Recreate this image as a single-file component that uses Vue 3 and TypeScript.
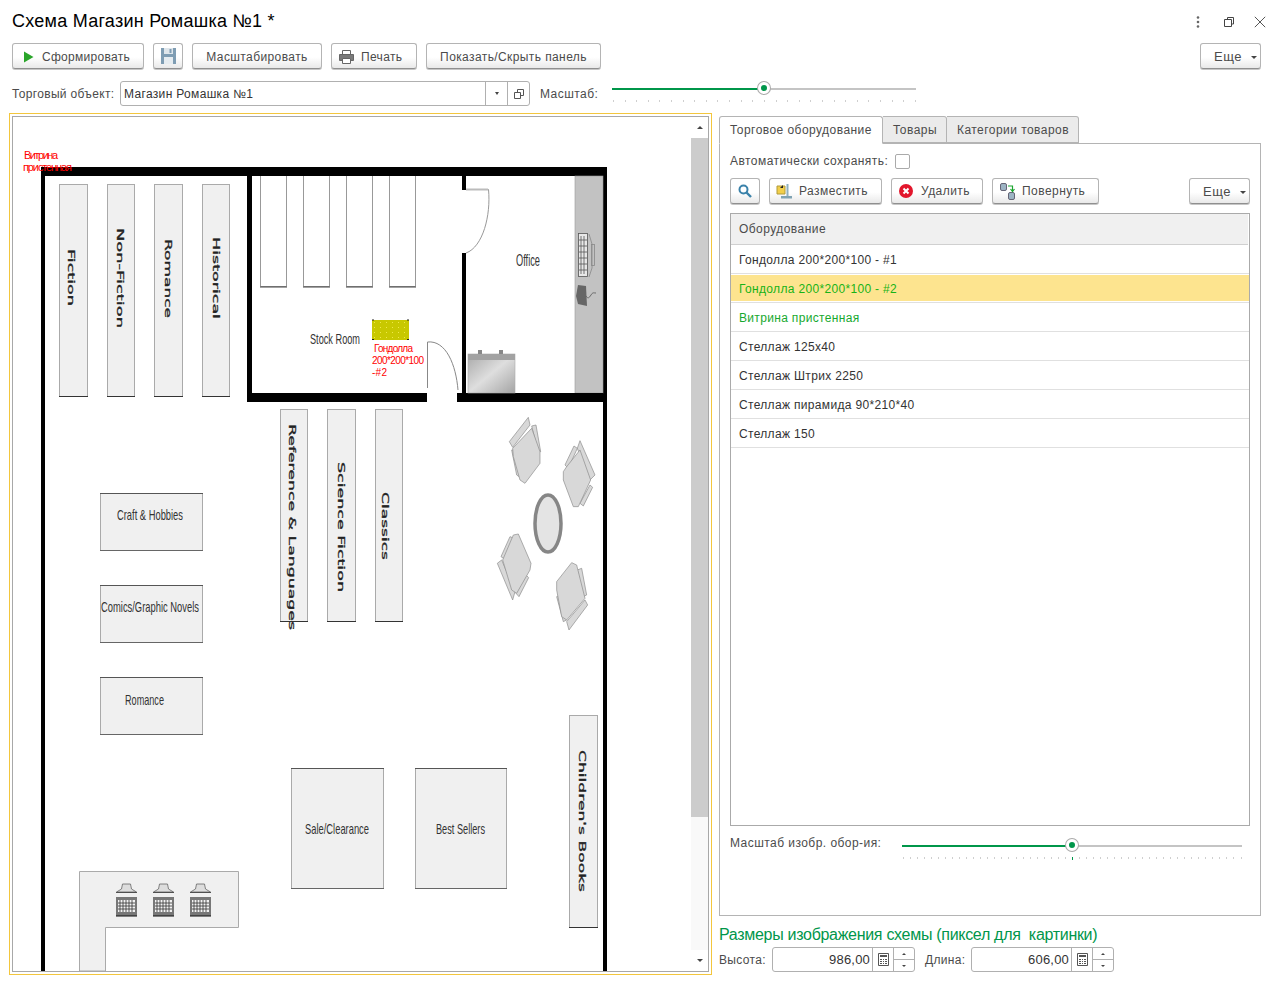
<script setup lang="ts">
const equipment = [
  { name: 'Гондолла 200*200*100 - #1', cls: '' },
  { name: 'Гондолла 200*200*100 - #2', cls: 'selected' },
  { name: 'Витрина пристенная', cls: 'green' },
  { name: 'Стеллаж 125х40', cls: '' },
  { name: 'Стеллаж Штрих 2250', cls: '' },
  { name: 'Стеллаж пирамида 90*210*40', cls: '' },
  { name: 'Стеллаж 150', cls: '' },
]
const ticksTop = Array.from({ length: 27 }, (_, i) => i)
const ticksBottom = Array.from({ length: 49 }, (_, i) => i)
const shelves = [
  { x: 59, y: 184, w: 29, h: 213, t: 'Fiction', tx: 68, ty: 249, len: 57 },
  { x: 107, y: 184, w: 28, h: 213, t: 'Non-Fiction', tx: 117, ty: 228, len: 100 },
  { x: 154, y: 184, w: 29, h: 213, t: 'Romance', tx: 165, ty: 239, len: 79 },
  { x: 202, y: 184, w: 28, h: 213, t: 'Historical', tx: 213, ty: 237, len: 82 },
  { x: 280, y: 409, w: 28, h: 213, t: 'Reference & Languages', tx: 289, ty: 424, len: 206 },
  { x: 327, y: 409, w: 29, h: 213, t: 'Science Fiction', tx: 338, ty: 462, len: 130 },
  { x: 375, y: 409, w: 28, h: 213, t: 'Classics', tx: 382, ty: 492, len: 68 },
  { x: 569, y: 715, w: 29, h: 213, t: "Children's Books", tx: 579, ty: 750, len: 142 },
]
const boxes = [
  { x: 100, y: 493, w: 103, h: 58, t: 'Craft & Hobbies', tx: 117, ty: 520, len: 66 },
  { x: 100, y: 585, w: 103, h: 58, t: 'Comics/Graphic Novels', tx: 101, ty: 612, len: 98 },
  { x: 100, y: 677, w: 103, h: 58, t: 'Romance', tx: 125, ty: 705, len: 39 },
  { x: 291, y: 768, w: 93, h: 121, t: 'Sale/Clearance', tx: 305, ty: 834, len: 64 },
  { x: 415, y: 768, w: 92, h: 121, t: 'Best Sellers', tx: 436, ty: 834, len: 49 },
]
const roomShelves = [260, 303, 346, 389]
const registers = [116, 153, 190]
const registerBars = [0, 1, 2, 3, 4]
const chairs = [
  {
    back: '118,125 175,52 180,75 128,142',
    arms: ['185,78 198,75 212,155 205,155', '125,150 135,150 150,232 140,225'],
    seat: '128,145 185,85 210,155 210,190 165,250 150,240 130,170',
  },
  {
    back: '330,122 375,225 360,240 322,145',
    arms: ['285,195 312,138 322,145 295,205', '330,310 360,255 368,262 340,318'],
    seat: '290,200 330,150 362,240 325,320 310,320 280,240 280,215',
  },
  {
    back: '82,490 95,480 135,575 128,600',
    arms: ['93,470 120,410 132,415 105,478', '138,580 168,525 176,533 147,590'],
    seat: '98,480 130,405 145,402 183,490 180,510 140,580 125,570',
  },
  {
    back: '345,600 353,615 297,690 290,665',
    arms: ['260,590 272,585 290,660 280,665', '322,510 335,505 350,585 340,590'],
    seat: '260,545 305,488 320,495 345,595 290,660 275,650 260,570',
  },
]
</script>

<template>
  <div class="page">
    <header class="title-row">
      <h1 class="title">Схема Магазин Ромашка №1 *</h1>
      <div class="window-icons">
        <svg width="4" height="12" viewBox="0 0 4 12"><circle cx="2" cy="1.5" r="1.3" /><circle cx="2" cy="6" r="1.3" /><circle cx="2" cy="10.5" r="1.3" /></svg>
        <svg class="win-restore" width="10" height="10" viewBox="0 0 10 10"><path d="M3.5 2.5V.5h6v6.5H7.500M.5 2.500h7v7h-7z" fill="none" stroke="#444" /></svg>
        <svg class="win-close" width="12" height="12" viewBox="0 0 12 12"><path d="M.8.8l10.4 10.4M11.2.8L.8 11.2" stroke="#555" fill="none" /></svg>
      </div>
    </header>

    <div class="toolbar">
      <button class="btn btn-form"><svg width="11" height="12" viewBox="0 0 11 12"><path d="M1 .5l9.500 5.500L1 11.500z" fill="#2aa52a" /></svg><span>Сформировать</span></button>
      <button class="btn btn-save">
        <svg width="15" height="16" viewBox="0 0 15 16"><path d="M0 0h15v16H0z" fill="#7f9db3" /><path d="M3 0h9v6H3z" fill="#dfe6eb" /><path d="M3 9h9v7H3z" fill="#e6ecf0" /><path d="M8.500 1h2v4h-2z" fill="#7f9db3" /></svg>
      </button>
      <button class="btn btn-scale">Масштабировать</button>
      <button class="btn btn-print">
        <svg width="15" height="14" viewBox="0 0 15 14"><path d="M3.500 .5h8v4h-8z" fill="#fff" stroke="#666" /><path d="M.5 4.500h14v6h-14z" fill="#7a7a7a" stroke="#666" /><path d="M3.500 8.500h8v5h-8z" fill="#fff" stroke="#666" /></svg>
        <span>Печать</span>
      </button>
      <button class="btn btn-panel">Показать/Скрыть панель</button>
      <div class="spacer"></div>
      <button class="btn btn-more">Еще<i class="caret"></i></button>
    </div>

    <div class="object-row">
      <label class="lbl obj-lbl">Торговый объект:</label>
      <div class="field object-field">
        <span class="field-value">Магазин Ромашка №1</span>
        <span class="field-btn"><i class="caret small"></i></span>
        <span class="field-btn open-btn"><svg width="10" height="10" viewBox="0 0 10 10"><path d="M3.500 3V.5h6v6H7M.5 3.500h6v6h-6z" fill="none" stroke="#555" /></svg></span>
      </div>
      <label class="lbl scale-lbl">Масштаб:</label>
      <div class="slider slider-top">
        <div class="track"><div class="track-fill"></div><div class="knob"></div></div>
        <div class="ticks"><i v-for="n in ticksTop" :key="n"></i></div>
      </div>
    </div>

    <main class="content">
      <section class="canvas-frame">
        <div class="canvas">
          <svg class="plan" width="678" height="854" viewBox="13 117 678 854">
            <defs>
              <linearGradient id="cab" x1="0" y1="0" x2="1" y2="1">
                <stop offset="0" stop-color="#a8a8a8" />
                <stop offset="0.5" stop-color="#dedede" />
                <stop offset="1" stop-color="#a4a4a4" />
              </linearGradient>
              <pattern id="dots" width="6" height="5" patternUnits="userSpaceOnUse">
                <rect x="2" y="2" width="1" height="1" fill="#efe84a" />
              </pattern>
            </defs>

            <rect x="41" y="167" width="566" height="9" fill="#000" />
            <rect x="41" y="167" width="4" height="804" fill="#000" />
            <rect x="603" y="167" width="4" height="804" fill="#000" />

            <rect x="575" y="176" width="28" height="217" fill="#c2c2c2" stroke="#999" stroke-width="0.6" />
            <g v-for="x in roomShelves" :key="x">
              <path :d="`M${x + 0.5} 176V286.500H${x + 26.5}V176`" fill="#fff" stroke="#999" />
              <path :d="`M${x} 287H${x + 27}`" stroke="#444" />
            </g>
            <rect x="247" y="176" width="5" height="226" fill="#000" />
            <rect x="247" y="393" width="180" height="9" fill="#000" />
            <rect x="457" y="393" width="146" height="9" fill="#000" />
            <rect x="462" y="176" width="4" height="14" fill="#000" />
            <rect x="462" y="253" width="4" height="141" fill="#000" />

            <path d="M466 189.500H488.500C491 215 483 247 466 253" fill="none" stroke="#999" stroke-width="1" />
            <path d="M466 189.500H488" fill="none" stroke="#bbb" stroke-width="2" />
            <path d="M427.500 388V342C446 340 456 365 458 390" fill="none" stroke="#888" stroke-width="1" />

            <rect x="468" y="354" width="47" height="39" fill="url(#cab)" stroke="#aaa" stroke-width="0.6" />
            <rect x="468" y="354" width="47" height="6" fill="#a2a2a2" />
            <rect x="478" y="350" width="4" height="4" fill="#888" />
            <rect x="499" y="350" width="4" height="4" fill="#888" />

            <g fill="none" stroke="#555" stroke-width="0.8">
              <rect x="578.500" y="233.500" width="9" height="43" fill="#e8e8e8" />
              <path d="M581 236v38M584 236v38M579 240h8M579 246h8M579 252h8M579 258h8M579 264h8M579 270h8" />
              <path d="M589 234l3 10v24l-3 9" stroke="#888" />
              <rect x="591.500" y="244.500" width="3" height="21" stroke="#888" />
              <path d="M586 296c2 3 3 2 5-1s2-2 5-2" />
            </g>
            <path d="M578 285l8 1 1 20-9-2-2-8z" fill="#666" />

            <g v-for="s in shelves" :key="s.t">
              <rect :x="s.x + 0.5" :y="s.y + 0.5" :width="s.w - 1" :height="s.h - 1" fill="#f0f0f0" stroke="#aaa" />
              <path :d="`M${s.x} ${s.y + s.h - 0.5}H${s.x + s.w}`" stroke="#333" />
              <text class="shelf-text" :transform="`translate(${s.tx} ${s.ty}) rotate(90)`" :textLength="s.len" lengthAdjust="spacingAndGlyphs">{{ s.t }}</text>
            </g>

            <g v-for="b in boxes" :key="b.t">
              <rect :x="b.x + 0.5" :y="b.y + 0.5" :width="b.w - 1" :height="b.h - 1" fill="#f0f0f0" stroke="#aaa" />
              <path :d="`M${b.x} ${b.y + 0.5}H${b.x + b.w}`" stroke="#555" />
              <path :d="`M${b.x} ${b.y + b.h - 0.5}H${b.x + b.w}`" stroke="#666" />
              <text class="room-text" :x="b.tx" :y="b.ty" :textLength="b.len" lengthAdjust="spacingAndGlyphs">{{ b.t }}</text>
            </g>

            <text class="room-text" x="310" y="344" textLength="50" lengthAdjust="spacingAndGlyphs">Stock Room</text>
            <text class="room-text office" x="516" y="266" textLength="24" lengthAdjust="spacingAndGlyphs">Office</text>

            <rect x="372" y="320" width="37" height="20" fill="#c8c800" />
            <rect x="372" y="320" width="37" height="20" fill="url(#dots)" />
            <path d="M372 320h2M407 320h2M372 339.500h2M407 339.500h2" stroke="#222" />
            <text class="red-text tight" x="24" y="159" textLength="34">Витрина</text>
            <text class="red-text tight" x="23" y="171" textLength="49">пристенная</text>
            <text class="red-text" x="374" y="352" textLength="39">Гондолла</text>
            <text class="red-text" x="372" y="364" textLength="52">200*200*100</text>
            <text class="red-text" x="372" y="376" textLength="15">-#2</text>

            <g transform="translate(470 400) scale(0.3333)">
              <g v-for="(c, i) in chairs" :key="i" fill="#d8d8d8" stroke="#8a8a8a" stroke-width="2" stroke-linejoin="round">
                <polygon :points="c.back" />
                <polygon v-for="a in c.arms" :key="a" :points="a" />
                <polygon :points="c.seat" />
              </g>
            </g>
            <ellipse cx="548" cy="523.500" rx="13" ry="28.500" fill="#e4e4e4" stroke="#868686" stroke-width="3.500" />

            <path d="M79.500 871.500H238.500V927.500H105.500V971H79.500Z" fill="#f0f0f0" stroke="#aaa" />
            <g v-for="x in registers" :key="x">
              <path :d="`M${x + 0.5} 892l5-3 1-5h8l1 5 5 3z`" fill="#ddd" stroke="#666" stroke-width="0.8" />
              <path :d="`M${x} 892.500h21`" stroke="#333" stroke-width="0.8" />
              <rect :x="x" y="897" width="21" height="19" fill="#777" />
              <rect :x="x + 2" y="900" width="17" height="12" fill="#f2f2f2" />
              <path v-for="n in registerBars" :key="n" :d="`M${x + 4 + n * 3} 900v12`" stroke="#333" stroke-width="0.8" />
              <path :d="`M${x + 2} 903h17M${x + 2} 906h17M${x + 2} 909h17`" stroke="#333" stroke-width="0.8" />
              <path :d="`M${x} 916h21`" stroke="#111" />
            </g>
          </svg>
          <div class="scrollbar">
            <div class="sb-end"><i class="arrow up"></i></div>
            <div class="sb-track"><div class="sb-thumb"></div></div>
            <div class="sb-end"><i class="arrow down"></i></div>
          </div>
        </div>
      </section>

      <aside class="side">
        <div class="tabs">
          <div class="tab active">Торговое оборудование</div>
          <div class="tab">Товары</div>
          <div class="tab">Категории товаров</div>
        </div>
        <div class="tab-body">
          <div class="auto-row">
            <span class="lbl">Автоматически сохранять:</span>
            <span class="check"></span>
          </div>
          <div class="side-tools">
            <button class="btn btn-search">
              <svg width="14" height="14" viewBox="0 0 14 14"><circle cx="5.500" cy="5.500" r="4" fill="none" stroke="#3a82aa" stroke-width="2" /><path d="M8.500 8.500l4.500 4.500" stroke="#3a82aa" stroke-width="2.400" /></svg>
            </button>
            <button class="btn btn-place">
              <svg width="17" height="16" viewBox="0 0 17 16"><path d="M1 3h8v8H1z" fill="#f2cf4a" stroke="#b09a3a" /><path d="M4 5l3-3 0 3z" fill="#222" /><path d="M10.500 1h2v12h-2z" fill="#8fb0bf" /><path d="M5 13h11v2.500H5z" fill="#7fa3b3" /></svg>
              <span>Разместить</span>
            </button>
            <button class="btn btn-del">
              <svg width="14" height="14" viewBox="0 0 14 14"><circle cx="7" cy="7" r="7" fill="#e2162c" /><path d="M4.500 4.500l5 5M9.500 4.500l-5 5" stroke="#fff" stroke-width="2" /></svg>
              <span>Удалить</span>
            </button>
            <button class="btn btn-rotate">
              <svg width="15" height="17" viewBox="0 0 15 17"><rect x="0.500" y="0.500" width="6" height="7" rx="1.500" fill="#9db4c4" stroke="#667" /><rect x="8.500" y="9.500" width="6" height="7" rx="1.500" fill="#9db4c4" stroke="#667" /><path d="M8 3h4.500v5M10.500 6l2 2.500 2-2.500" fill="none" stroke="#1aa52e" stroke-width="1.200" /></svg>
              <span>Повернуть</span>
            </button>
            <div class="spacer"></div>
            <button class="btn btn-more-2">Еще<i class="caret"></i></button>
          </div>
          <div class="grid">
            <div class="grid-head">Оборудование</div>
            <div v-for="row in equipment" :key="row.name" class="grid-row" :class="row.cls">{{ row.name }}</div>
          </div>
          <div class="image-scale">
            <span class="lbl img-lbl">Масштаб изобр. обор-ия:</span>
            <div class="slider slider-bottom">
              <div class="track"><div class="track-fill"></div><div class="knob"></div></div>
              <div class="ticks"><i v-for="n in ticksBottom" :key="n" :class="{ on: n === 24 }"></i></div>
            </div>
          </div>
        </div>
        <h2 class="sizes-title">Размеры изображения схемы (пиксел для&nbsp; картинки)</h2>
        <div class="sizes-row">
          <span class="lbl h-lbl">Высота:</span>
          <div class="field num-field">
            <span class="num-value">986,00</span>
            <span class="calc"><svg width="11" height="13" viewBox="0 0 11 13"><path d="M.5.500h10v12H.5z" fill="#fff" stroke="#555" /><path d="M2 2h7v2H2z" fill="#555" /><path d="M2 6h2v1H2zM5 6h1v1H5zM7 6h2v1H7zM2 8h2v1H2zM5 8h1v1H5zM7 8h2v1H7zM2 10h2v1H2zM5 10h1v1H5zM7 10h2v1H7z" fill="#555" /></svg></span>
            <span class="spin"><i class="spin-cell"><b class="mini up"></b></i><i class="spin-cell"><b class="mini down"></b></i></span>
          </div>
          <span class="lbl len-lbl">Длина:</span>
          <div class="field num-field">
            <span class="num-value">606,00</span>
            <span class="calc"><svg width="11" height="13" viewBox="0 0 11 13"><path d="M.5.500h10v12H.5z" fill="#fff" stroke="#555" /><path d="M2 2h7v2H2z" fill="#555" /><path d="M2 6h2v1H2zM5 6h1v1H5zM7 6h2v1H7zM2 8h2v1H2zM5 8h1v1H5zM7 8h2v1H7zM2 10h2v1H2zM5 10h1v1H5zM7 10h2v1H7z" fill="#555" /></svg></span>
            <span class="spin"><i class="spin-cell"><b class="mini up"></b></i><i class="spin-cell"><b class="mini down"></b></i></span>
          </div>
        </div>
      </aside>
    </main>
  </div>
</template>

<style>
html, body { margin: 0; background: #fff; }
</style>

<style scoped>
.page {
  width: 1280px;
  height: 984px;
  box-sizing: border-box;
  overflow: hidden;
  background: #fff;
  font-family: "Liberation Sans", Arial, sans-serif;
  font-size: 12px;
  color: #4b4b4b;
  padding: 0 19px 0 9px;
  position: relative;
  letter-spacing: 0.45px;
}
.title-row { display: flex; align-items: center; height: 43px; padding-left: 3px; }
.title { margin: 0; font-size: 18px; font-weight: 400; color: #000; letter-spacing: 0.25px; line-height: 41px; flex: 1; }
.window-icons { display: flex; align-items: center; margin-right: -5px; height: 41px; }
.window-icons svg { fill: #666; }
.win-restore { margin-left: 24px; }
.win-close { margin-left: 20px; }

.btn {
  display: inline-flex;
  align-items: center;
  justify-content: center;
  height: 26px;
  box-sizing: border-box;
  padding: 0;
  border: 1px solid #b4b4b4;
  border-bottom-color: #8f8f8f;
  border-radius: 3px;
  background: linear-gradient(#fff 55%, #e9e9e9);
  box-shadow: 0 1px 0 #c6c6c6;
  font: inherit;
  letter-spacing: inherit;
  color: #4b4b4b;
}
.toolbar { display: flex; align-items: flex-start; height: 38px; padding-left: 3px; }
.btn-form { width: 132px; gap: 8px; justify-content: flex-start; padding: 1px 0 0 10px; letter-spacing: 0.28px; }
.btn-save { width: 30px; margin-left: 9px; }
.btn-scale { width: 130px; margin-left: 9px; padding-top: 1px; letter-spacing: 0.4px; }
.btn-print { width: 86px; margin-left: 9px; gap: 7px; justify-content: flex-start; padding: 1px 0 0 7px; letter-spacing: 0.33px; }
.btn-panel { width: 175px; margin-left: 9px; padding-top: 1px; letter-spacing: 0.4px; }
.btn-more, .btn-more-2 { width: 61px; gap: 9px; font-size: 13px; letter-spacing: 0.5px; justify-content: flex-start; padding-left: 13px; }
.spacer { flex: 1; }
.caret { display: inline-block; width: 0; height: 0; border: 3px solid transparent; border-top: 3px solid #444; border-bottom: 0; margin-top: 2px; }

.object-row { display: flex; align-items: center; height: 25px; padding-left: 3px; }
.lbl { white-space: nowrap; flex: none; }
.obj-lbl { width: 103px; letter-spacing: 0.33px; }
.object-field { width: 410px; margin-left: 5px; height: 25px; flex: none; }
.field {
  display: flex;
  box-sizing: border-box;
  border: 1px solid #b0b0b0;
  border-radius: 3px;
  background: #fff;
  align-items: stretch;
}
.field-value { flex: 1; line-height: 24px; padding-left: 3px; color: #333; letter-spacing: 0.33px; }
.field-btn { width: 21px; display: flex; align-items: center; justify-content: center; border-left: 1px solid #b0b0b0; }
.caret.small { border-width: 2.5px; border-top-width: 3px; border-bottom-width: 0; margin: 0; }
.scale-lbl { margin-left: 10px; width: 58px; }
.slider { position: relative; flex: none; }
.slider-top { width: 304px; margin-left: 14px; height: 25px; }
.track { position: absolute; left: 0; right: 0; top: 7px; height: 2px; background: #c4c4c4; }
.track-fill { height: 100%; background: #00964a; }
.slider-top .track-fill { width: 152px; }
.knob {
  position: absolute;
  top: -6px;
  width: 12px;
  height: 12px;
  box-sizing: border-box;
  border-radius: 50%;
  border: 3px solid #fff;
  background: #00964a;
  box-shadow: 0 0 0 1px #aaa;
}
.slider-top .knob { left: 146px; }
.ticks { position: absolute; left: 1px; right: 0; top: 19px; display: flex; justify-content: space-between; }
.ticks i { width: 1px; height: 2px; background: #cfcfcf; }
.ticks i.on { background: #00964a; height: 3px; }

.content { display: flex; margin-top: 7px; gap: 7px; align-items: flex-start; }
.canvas-frame { width: 703px; height: 862px; flex: none; box-sizing: border-box; border: 1px solid #f3c63d; padding: 2px; }
.canvas { height: 100%; box-sizing: border-box; border: 1px solid #a8a8a8; display: flex; overflow: hidden; }
.plan { display: block; flex: none; }
.plan text { letter-spacing: 0; }
.shelf-text { font-family: "DejaVu Sans", sans-serif; font-size: 9px; fill: #222; stroke: #222; stroke-width: 0.3; }
.room-text { font-family: "Liberation Sans", sans-serif; font-size: 15px; fill: #333; }
.room-text.office { font-size: 17px; }
.red-text { font-family: "Liberation Sans", sans-serif; font-size: 10px; fill: #f00; }
.red-text.tight { font-size: 11px; }
.scrollbar { width: 17px; flex: none; display: flex; flex-direction: column; }
.sb-end { height: 21px; flex: none; display: flex; align-items: center; justify-content: center; }
.arrow { display: block; width: 0; height: 0; border: 3px solid transparent; }
.arrow.up { border-bottom: 3px solid #444; border-top: 0; }
.arrow.down { border-top: 3px solid #444; border-bottom: 0; }
.sb-track { flex: 1; background: #f9f9f9; }
.sb-thumb { height: 679px; background: #ccc; }

.side { width: 542px; flex: none; margin-top: 3px; }
.tabs { display: flex; height: 27px; position: relative; z-index: 1; }
.tab {
  box-sizing: border-box;
  height: 27px;
  padding: 0 10px;
  line-height: 26px;
  white-space: nowrap;
  border: 1px solid #b4b4b4;
  border-left-width: 0;
  border-radius: 0 3px 0 0;
  background: #ebebeb;
}
.tab.active { background: #fff; border-left-width: 1px; border-bottom-color: #fff; border-radius: 3px 3px 0 0; width: 164px; height: 28px; }
.tab:nth-child(2) { width: 64px; }
.tab:nth-child(3) { width: 132px; }
.tab-body { height: 773px; box-sizing: border-box; border: 1px solid #b4b4b4; padding: 10px 10px 0; }
.auto-row { display: flex; align-items: center; gap: 7px; height: 14px; }
.check { width: 15px; height: 15px; box-sizing: border-box; border: 1px solid #aaa; border-radius: 2px; background: #fff; flex: none; }
.side-tools { display: flex; margin-top: 10px; height: 35px; }
.btn-search { width: 30px; }
.btn-place { width: 113px; margin-left: 9px; gap: 6px; justify-content: flex-start; padding-left: 6px; }
.btn-del { width: 92px; margin-left: 9px; gap: 8px; justify-content: flex-start; padding-left: 7px; }
.btn-rotate { width: 107px; margin-left: 9px; gap: 7px; justify-content: flex-start; padding-left: 7px; }
.grid { height: 613px; box-sizing: border-box; border: 1px solid #aaa; }
.grid-head { height: 30px; line-height: 31px; padding-left: 8px; background: #f0f0f0; border-bottom: 1px solid #d0d0d0; margin-right: 1px; }
.grid-row { height: 29px; line-height: 30px; box-sizing: border-box; padding-left: 8px; border-bottom: 1px solid #e0e0e0; color: #333; letter-spacing: 0.33px; }
.grid-row.selected { background: #fde48f; color: #17b317; border-bottom: 1px solid #fff; box-shadow: 0 1px 0 #e0e0e0; height: 27px; margin: 1px 0 1px; line-height: 28px; }
.grid-row.green { color: #17a92f; }
.image-scale { display: flex; margin-top: 10px; }
.img-lbl { line-height: 14px; width: 172px; }
.slider-bottom { width: 340px; height: 25px; margin-top: 1px; }
.slider-bottom .track { top: 8px; }
.slider-bottom .track-fill { width: 170px; }
.slider-bottom .knob { left: 164px; }
.slider-bottom .ticks { top: 20px; }

.sizes-title { margin: 9px 0 0; font-size: 16px; font-weight: 400; color: #00964a; line-height: 19px; letter-spacing: -0.3px; }
.sizes-row { display: flex; align-items: center; margin-top: 3px; height: 25px; }
.h-lbl { width: 47px; letter-spacing: 0.33px; }
.num-field { width: 143px; height: 25px; margin-left: 6px; flex: none; }
.len-lbl { margin-left: 10px; width: 40px; letter-spacing: 0.33px; }
.num-value { flex: 1; text-align: right; line-height: 23px; padding-right: 2px; font-size: 13px; letter-spacing: 0.2px; color: #333; }
.calc { width: 20px; flex: none; border-left: 1px solid #b0b0b0; display: flex; align-items: center; justify-content: center; }
.spin { width: 20px; flex: none; border-left: 1px solid #b0b0b0; display: flex; flex-direction: column; }
.spin-cell { flex: 1; display: flex; align-items: center; justify-content: center; }
.spin-cell + .spin-cell { border-top: 1px solid #b0b0b0; }
.mini { display: block; width: 0; height: 0; border: 2px solid transparent; }
.mini.up { border-bottom: 2px solid #444; border-top: 0; }
.mini.down { border-top: 2px solid #444; border-bottom: 0; }
</style>
